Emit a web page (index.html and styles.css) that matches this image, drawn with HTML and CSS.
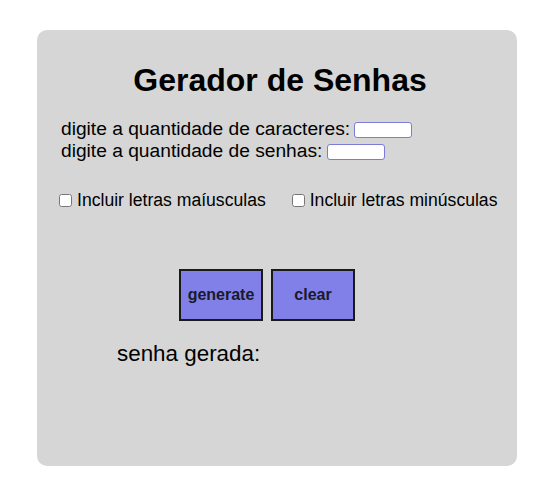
FILE: index.html
```html
<!DOCTYPE html>
<html lang="pt">
<head>
<meta charset="utf-8">
<title>Gerador de Senhas</title>
<link rel="stylesheet" href="styles.css">
</head>
<body>
<main class="card">
  <h1 class="title">Gerador de Senhas</h1>
  <div class="fields">
    <div class="field"><label for="qc">digite a quantidade de caracteres:</label> <input id="qc" class="num" type="text"></div>
    <div class="field"><label for="qs">digite a quantidade de senhas:</label> <input id="qs" class="num" type="text"></div>
  </div>
  <div class="options">
    <label class="opt"><input type="checkbox" class="chk"> Incluir letras maíusculas</label>
    <label class="opt"><input type="checkbox" class="chk"> Incluir letras minúsculas</label>
  </div>
  <div class="actions">
    <button class="btn" type="button">generate</button>
    <button class="btn" type="button">clear</button>
  </div>
  <p class="result">senha gerada:</p>
</main>
</body>
</html>
```
FILE: styles.css
```css
html, body {
  margin: 0;
  padding: 0;
  background: #ffffff;
}
body {
  font-family: "Liberation Sans", Arial, sans-serif;
  color: #000;
  padding: 30px 0 0 37px;
}
.card {
  box-sizing: border-box;
  width: 480px;
  height: 436px;
  background: #d6d6d6;
  border-radius: 10px;
  padding: 28px 0 0 24px;
}
.title {
  margin: 0;
  font-size: 32px;
  font-weight: bold;
  text-align: center;
  padding-right: 18px;
  line-height: 44px;
}
.fields {
  margin-top: 16px;
  font-size: 19.2px;
  line-height: 22px;
}
.num {
  box-sizing: border-box;
  width: 58px;
  height: 16px;
  margin-left: -1px;
  border: 1px solid #7b7bd8;
  border-radius: 3px;
  background: #fff;
  padding: 0;
  vertical-align: 1px;
}
.options {
  display: flex;
  gap: 25px;
  margin-top: 28px;
  margin-left: -3px;
  font-size: 17.6px;
}
.opt {
  display: flex;
  align-items: center;
}
.chk {
  width: 13px;
  height: 13px;
  margin: 0 5px 0 1px;
}
.actions {
  display: flex;
  justify-content: flex-start;
  gap: 8px;
  margin-top: 58px;
  margin-left: 118px;
}
.btn {
  box-sizing: border-box;
  width: 84px;
  height: 52px;
  background: #8080e8;
  border: 2px solid #1a1a1a;
  font-family: "Liberation Sans", Arial, sans-serif;
  font-weight: bold;
  font-size: 16px;
  color: #1a1a2a;
  padding: 0;
}
.result {
  margin: 20px 0 0 56px;
  font-size: 22.4px;
}
```
